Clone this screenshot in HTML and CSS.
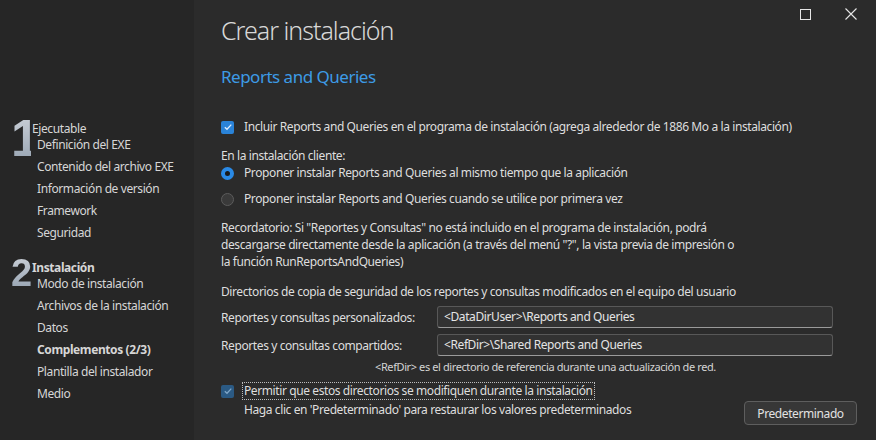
FILE: index.html
```html
<!DOCTYPE html>
<html lang="es">
<head>
    <meta charset="UTF-8">
    <title>Crear instalación</title>
    <link rel="stylesheet" href="styles.css">
</head>
<body>
<div id="window">
    <div id="sidebar">
        <div class="step">
            <div class="stepNum big">1</div>
            <div class="stepBody">
                <div class="stepTitle">Ejecutable</div>
                <ul class="stepItems">
                    <li>Definición del EXE</li>
                    <li>Contenido del archivo EXE</li>
                    <li>Información de versión</li>
                    <li>Framework</li>
                    <li>Seguridad</li>
                </ul>
            </div>
        </div>
        <div class="step">
            <div class="stepNum">2</div>
            <div class="stepBody">
                <div class="stepTitle bold">Instalación</div>
                <ul class="stepItems">
                    <li>Modo de instalación</li>
                    <li>Archivos de la instalación</li>
                    <li>Datos</li>
                    <li class="current">Complementos (2/3)</li>
                    <li>Plantilla del instalador</li>
                    <li>Medio</li>
                </ul>
            </div>
        </div>
    </div>

    <div id="main">
        <div id="titleBar">
            <h1>Crear instalación</h1>
            <div class="winButtons">
                <span class="winBtn">
                    <svg width="11" height="11" viewBox="0 0 11 11"><rect x="0.5" y="0.5" width="10" height="10" fill="none" stroke="#e6e6e6" stroke-width="1"/></svg>
                </span>
                <span class="winBtn">
                    <svg width="12" height="12" viewBox="0 0 12 12"><path d="M0.5 0.5 L11.5 11.5 M11.5 0.5 L0.5 11.5" stroke="#e6e6e6" stroke-width="1.1"/></svg>
                </span>
            </div>
        </div>
        <h2>Reports and Queries</h2>

        <div class="check row1">
            <span class="box on">
                <svg width="10" height="10" viewBox="0 0 10 10"><path d="M1.8 5.2 L4 7.3 L8.3 2.6" fill="none" stroke="#dcecff" stroke-width="1.3"/></svg>
            </span>
            <span>Incluir Reports and Queries en el programa de instalación (agrega alrededor de 1886 Mo a la instalación)</span>
        </div>

        <div class="line clientLabel">En la instalación cliente:</div>
        <div class="check radioRow">
            <span class="radio on"></span>
            <span>Proponer instalar Reports and Queries al mismo tiempo que la aplicación</span>
        </div>
        <div class="check radioRow second">
            <span class="radio"></span>
            <span>Proponer instalar Reports and Queries cuando se utilice por primera vez</span>
        </div>

        <p class="reminder">Recordatorio: Si "Reportes y Consultas" no está incluido en el programa de instalación, podrá descargarse directamente desde la aplicación (a través del menú "?", la vista previa de impresión o la función RunReportsAndQueries)</p>

        <div class="line dirTitle">Directorios de copia de seguridad de los reportes y consultas modificados en el equipo del usuario</div>
        <div class="field">
            <label>Reportes y consultas personalizados:</label>
            <div class="input">&lt;DataDirUser&gt;\Reports and Queries</div>
        </div>
        <div class="field">
            <label>Reportes y consultas compartidos:</label>
            <div class="input">&lt;RefDir&gt;\Shared Reports and Queries</div>
        </div>
        <div class="note">&lt;RefDir&gt; es el directorio de referencia durante una actualización de red.</div>

        <div class="check allowRow">
            <span class="box dim">
                <svg width="10" height="10" viewBox="0 0 10 10"><path d="M1.8 5.2 L4 7.3 L8.3 2.6" fill="none" stroke="#7fa6c8" stroke-width="1.3"/></svg>
            </span>
            <span class="focus">Permitir que estos directorios se modifiquen durante la instalación</span>
        </div>
        <div class="bottomRow">
            <span class="hint">Haga clic en 'Predeterminado' para restaurar los valores predeterminados</span>
            <button class="btn">Predeterminado</button>
        </div>
    </div>
</div>
</body>
</html>
```

FILE: styles.css
```css
* {
    margin: 0;
    padding: 0;
    box-sizing: border-box;
}

body {
    width: 876px;
    height: 440px;
    overflow: hidden;
    background-color: #2b2b2b;
    font-family: "Noto Sans", "Open Sans", sans-serif;
    font-size: 12px;
    letter-spacing: -0.4px;
    color: #dedede;
}

#window {
    display: flex;
    height: 440px;
}

/* left column with the steps */
#sidebar {
    width: 194px;
    flex-shrink: 0;
    background-color: #262626;
    padding-top: 121px;
    color: #d6d6d6;
}

.step {
    display: flex;
    margin-bottom: 19px;
}

.stepNum {
    width: 20px;
    margin-left: 11px;
    margin-right: 1px;
    font-family: "Liberation Sans", sans-serif;
    font-weight: bold;
    font-size: 38px;
    line-height: 30px;
    height: 30px;
    letter-spacing: -6px;
    color: #b6bec8;
    background: linear-gradient(#c6ccd4, #9aa6b4);
    -webkit-background-clip: text;
    background-clip: text;
    -webkit-text-fill-color: transparent;
    margin-top: -2px;
}

.stepNum.big {
    font-size: 51px;
    line-height: 42px;
    height: 42px;
    letter-spacing: -9px;
    margin-top: -3px;
}

.stepTitle {
    line-height: 16px;
}

.bold {
    font-weight: bold;
}

.stepItems {
    list-style: none;
    padding-left: 5px;
}

.stepItems li {
    line-height: 16px;
}

.stepItems li + li {
    margin-top: 6px;
}

.stepItems .current {
    font-weight: bold;
}

/* right column */
#main {
    flex: 1;
    padding-left: 27px;
}

#titleBar {
    display: flex;
    justify-content: space-between;
    align-items: flex-start;
}

h1 {
    font-weight: 300;
    font-size: 25px;
    letter-spacing: -1px;
    color: #d8d8d8;
    margin-top: 12px;
    line-height: 36px;
}

.winButtons {
    display: flex;
    margin-top: 8px;
    margin-right: 2px;
}

.winBtn {
    width: 46px;
    height: 12px;
    display: flex;
    justify-content: center;
    align-items: center;
}

h2 {
    font-weight: normal;
    font-size: 17px;
    letter-spacing: -0.5px;
    color: #3d9be6;
    margin-top: 17px;
    line-height: 24px;
}

.check {
    display: flex;
    align-items: center;
    gap: 10px;
    line-height: 16px;
}

.row1 {
    margin-top: 30px;
}

.box {
    width: 13px;
    height: 13px;
    border-radius: 2px;
    display: flex;
    justify-content: center;
    align-items: center;
}

.box.on {
    background-color: #2a83d8;
}

.box.dim {
    background-color: #2b5a84;
}

.line {
    line-height: 16px;
}

.clientLabel {
    margin-top: 13px;
}

.radioRow {
    margin-top: 1px;
}

.radioRow.second {
    margin-top: 10px;
}

.radio {
    width: 13px;
    height: 13px;
    border-radius: 50%;
    background-color: #3a3a3a;
    border: 1px solid #5c5c5c;
}

.radio.on {
    border: 4px solid #2a8ae6;
    background: #1a1a1a;
}

.reminder {
    margin-top: 12px;
    width: 515px;
    line-height: 17px;
}

.dirTitle {
    margin-top: 14px;
}

.field {
    display: flex;
    align-items: center;
    margin-top: 6px;
}

.field label {
    width: 216px;
}

.input {
    width: 396px;
    height: 22px;
    line-height: 20px;
    padding-left: 6px;
    background-color: #323232;
    border: 1px solid #585858;
    border-bottom-color: #9a9a9a;
    border-radius: 3px;
    color: #e4e4e4;
}

.note {
    font-size: 11px;
    margin-left: 154px;
    margin-top: 3px;
    line-height: 15px;
    color: #d4d4d4;
}

.allowRow {
    margin-top: 9px;
}

.focus {
    outline: 1px dotted #bdbdbd;
    padding: 0 1px;
    margin-left: -1px;
}

.bottomRow {
    display: flex;
    justify-content: space-between;
    align-items: flex-start;
    padding-left: 23px;
    padding-right: 19px;
    margin-top: 3px;
}

.hint {
    line-height: 16px;
}

.btn {
    margin-top: -1px;
    width: 113px;
    height: 24px;
    background-color: #373737;
    border: 1px solid #5e5e5e;
    border-radius: 4px;
    color: #e2e2e2;
    font-family: "Noto Sans", "Open Sans", sans-serif;
    font-size: 12px;
    letter-spacing: -0.4px;
}
```
